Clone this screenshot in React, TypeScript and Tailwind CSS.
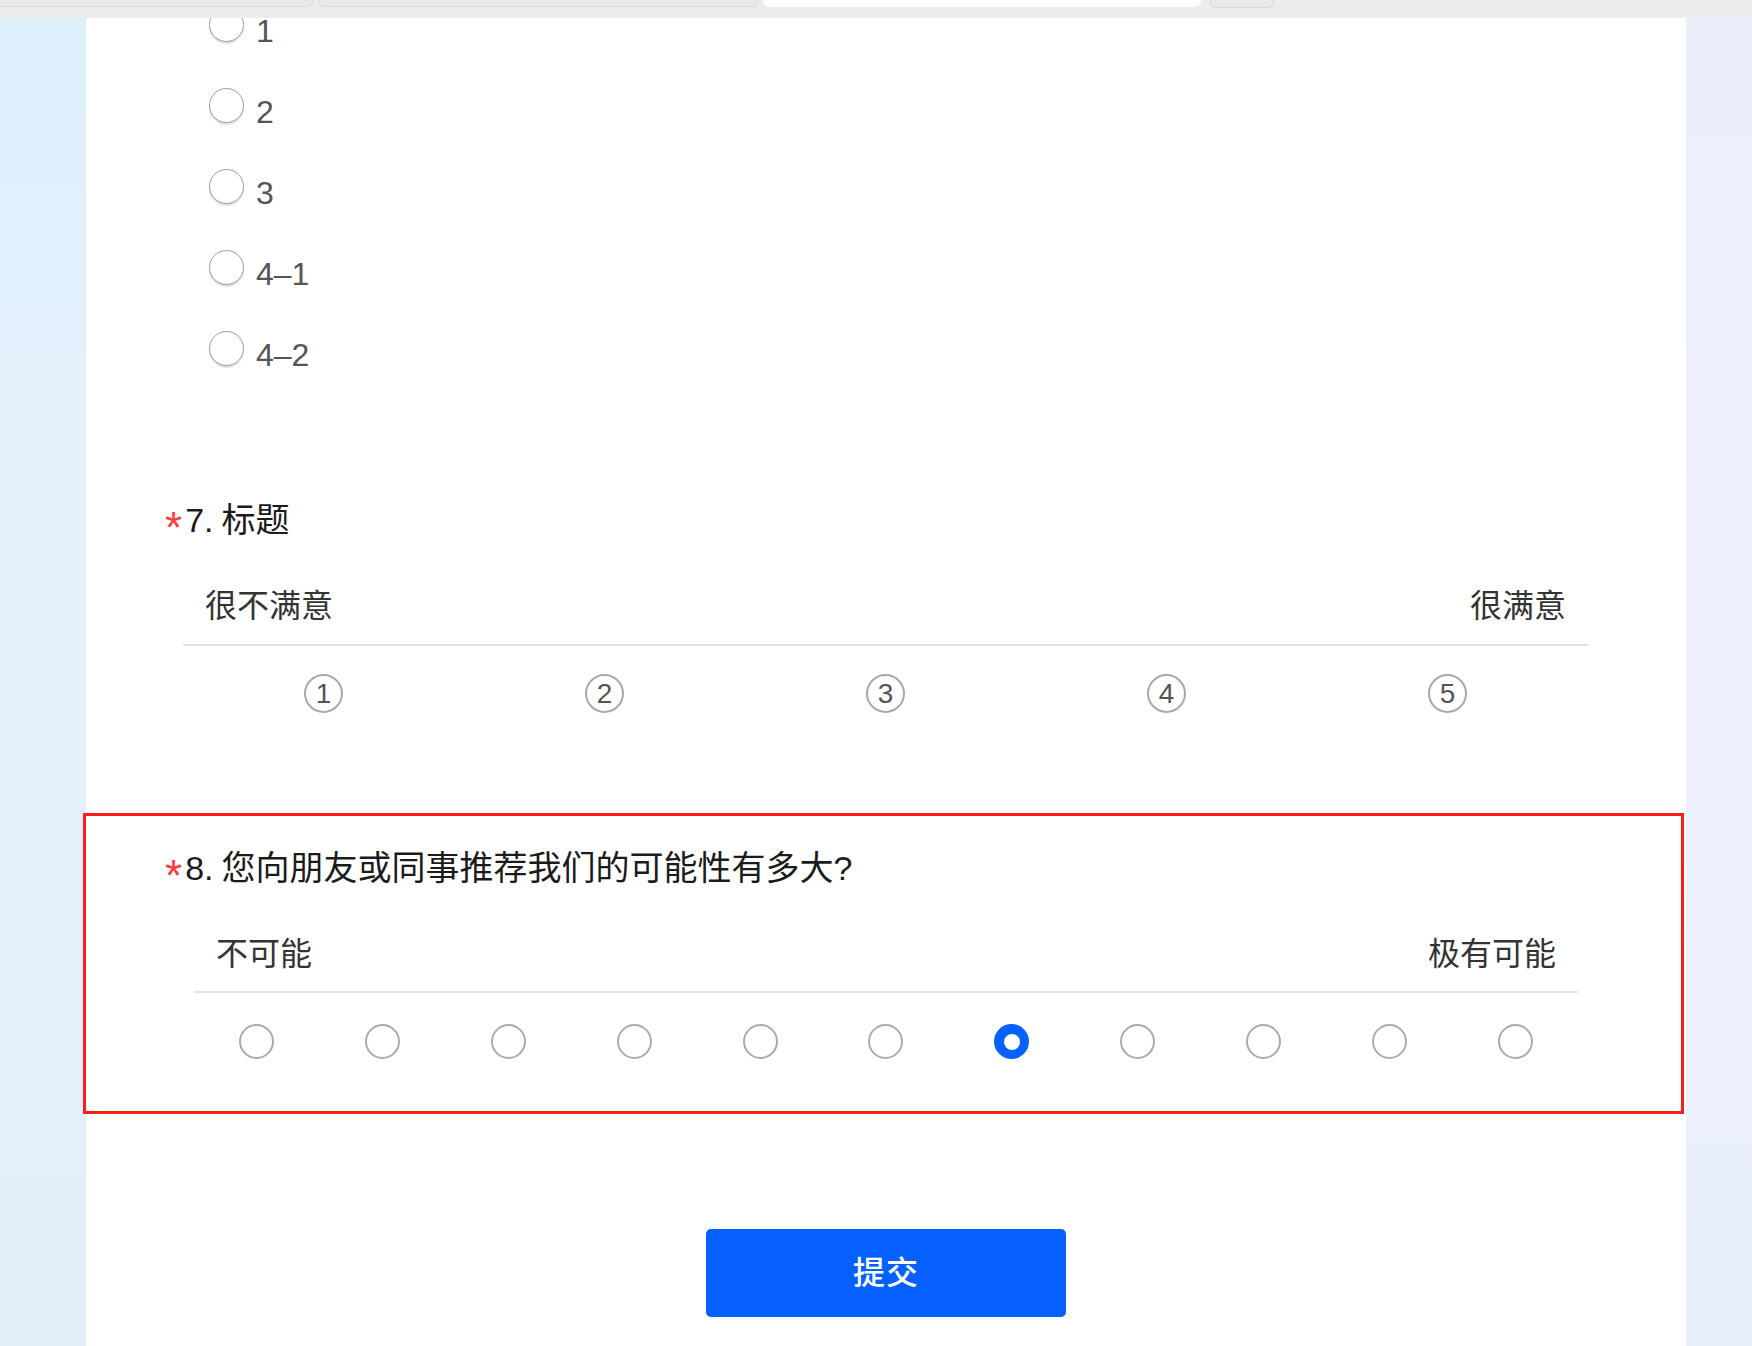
import React from "react";

const FONT = '"Liberation Sans", "Noto Sans CJK SC", sans-serif';

function OptionRadio({ label }: { label: string }) {
  return (
    <div className="h-[81px] flex items-center pl-[123px]">
      <div className="w-[35px] h-[35px] rounded-full border-[1.5px] border-[#9d9d9d] bg-white shadow-[0_2px_1px_rgba(0,0,0,0.12)] shrink-0" />
      <span className="ml-[12px] mt-[12px] text-[32px] leading-[40px] text-[#555555]">{label}</span>
    </div>
  );
}

function Title({ num, text }: { num: string; text: string }) {
  return (
    <div className="h-[48px] flex items-center pl-[79px] text-[34px] leading-[48px] text-[#1b1b1b]">
      <span className="text-[#ff3d3d] text-[44px] relative top-[8px] mr-[3px]">*</span>
      <span>{num}</span>
      <span className="ml-[8px]">{text}</span>
    </div>
  );
}

export default function App() {
  const q8 = Array.from({ length: 11 }, (_, i) => i);
  return (
    <div className="min-h-screen w-[1752px] h-[1346px] overflow-hidden bg-[#e6f0fb] flex flex-col" style={{ fontFamily: FONT }}>
      {/* browser tab strip */}
      <div className="relative z-10 h-[18px] shrink-0 bg-[#ececec] flex items-start">
        <div className="w-[313px] h-[7px] bg-[#e8e8e8] border-b border-r border-[#d9d9d9] rounded-br-[6px]" />
        <div className="ml-[5px] w-[440px] h-[7px] bg-[#e8e8e8] border-b border-x border-[#d9d9d9] rounded-b-[6px]" />
        <div className="ml-[5px] w-[438px] h-[7px] bg-white rounded-b-[6px]" />
        <div className="ml-[9px] w-[64px] h-[8px] bg-[#e8e8e8] border-b border-x border-[#d6d6d6] rounded-b-[6px]" />
      </div>

      <div className="flex flex-1">
        <div className="w-[86px] shrink-0 bg-gradient-to-b from-[#def0fc] via-[#e4f0fb] to-[#e3eefa]" />

        <div className="w-[1600px] shrink-0 bg-white relative">
          {/* options list */}
          <div className="mt-[-34px]">
            {["1", "2", "3", "4–1", "4–2"].map((o) => (
              <OptionRadio key={o} label={o} />
            ))}
          </div>

          {/* Question 7 */}
          <div className="mt-[107px]">
            <Title num="7." text="标题" />
            <div className="mt-[38px] mx-[97px] mr-[98px]">
              <div className="h-[48px] flex items-center justify-between px-[22px] text-[32px] leading-[48px] text-[#333333]">
                <span>很不满意</span>
                <span>很满意</span>
              </div>
              <div className="mt-[14px] h-[2px] bg-[#e2e2e2]" />
              <div className="mt-[28px] flex">
                {["1", "2", "3", "4", "5"].map((n) => (
                  <div key={n} className="flex-1 flex justify-center">
                    <div className="w-[39px] h-[39px] rounded-full border-2 border-[#a9a9a9] flex items-center justify-center text-[28px] leading-none text-[#555555]">
                      {n}
                    </div>
                  </div>
                ))}
              </div>
            </div>
          </div>

          {/* Question 8 (highlighted) */}
          <div className="mt-[100px] ml-[-3px] w-[1601px] border-[3px] border-[#fb1c1c] pt-[28px] pb-[52px]">
            <Title num="8." text="您向朋友或同事推荐我们的可能性有多大?" />
            <div className="mt-[38px] ml-[108px] mr-[103px]">
              <div className="h-[48px] flex items-center justify-between px-[22px] text-[32px] leading-[48px] text-[#333333]">
                <span>不可能</span>
                <span>极有可能</span>
              </div>
              <div className="mt-[13px] h-[2px] bg-[#e2e2e2]" />
              <div className="mt-[31px] flex">
                {q8.map((i) => (
                  <div key={i} className="flex-1 flex justify-center">
                    {i === 6 ? (
                      <div className="w-[35px] h-[35px] rounded-full bg-[#0661ff] flex items-center justify-center">
                        <div className="w-[16px] h-[16px] rounded-full bg-white" />
                      </div>
                    ) : (
                      <div className="w-[35px] h-[35px] rounded-full border-2 border-[#ababab] bg-white" />
                    )}
                  </div>
                ))}
              </div>
            </div>
          </div>

          {/* submit */}
          <div className="mt-[115px] ml-[620px] w-[360px] h-[88px] rounded-[5px] bg-[#0660ff] flex items-center justify-center text-white text-[32px] font-medium tracking-[1px]">
            提交
          </div>
        </div>

        <div className="flex-1 bg-gradient-to-b from-[#ebeffc] via-[#eef0fc] to-[#e9f0fb]" />
      </div>
    </div>
  );
}
